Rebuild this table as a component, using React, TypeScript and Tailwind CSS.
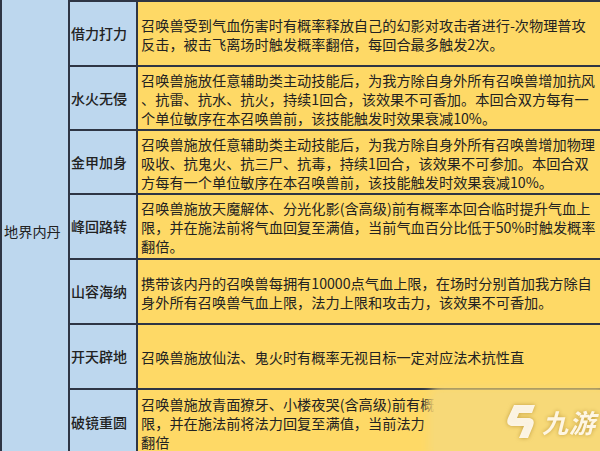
import React from "react";

type Row = { name: string; lines: string[]; h: string };

const rows: Row[] = [
  {
    name: "借力打力",
    h: "h-[65px]",
    lines: [
      "召唤兽受到气血伤害时有概率释放自己的幻影对攻击者进行-次物理普攻",
      "反击，被击飞离场时触发概率翻倍，每回合最多触发2次。",
    ],
  },
  {
    name: "水火无侵",
    h: "h-[64px]",
    lines: [
      "召唤兽施放任意辅助类主动技能后，为我方除自身外所有召唤兽增加抗风",
      "、抗雷、抗水、抗火，持续1回合，该效果不可香加。本回合双方每有一",
      "个单位敏序在本召唤兽前，该技能触发时效果衰减10%。",
    ],
  },
  {
    name: "金甲加身",
    h: "h-[64px]",
    lines: [
      "召唤兽施放任意辅助类主动技能后，为我方除自身外所有召唤兽增加物理",
      "吸收、抗鬼火、抗三尸、抗毒，持续1回合，该效果不可参加。本回合双",
      "方每有一个单位敏序在本召唤兽前，该技能触发时效果衰减10%。",
    ],
  },
  {
    name: "峰回路转",
    h: "h-[65px]",
    lines: [
      "召唤兽施放天魔解体、分光化影(含高级)前有概率本回合临时提升气血上",
      "限，并在施法前将气血回复至满值，当前气血百分比低于50%时触发概率",
      "翻倍。",
    ],
  },
  {
    name: "山容海纳",
    h: "h-[65px]",
    lines: [
      "携带该内丹的召唤兽每拥有10000点气血上限，在场时分别首加我方除自",
      "身外所有召唤兽气血上限，法力上限和攻击力，该效果不可香加。",
    ],
  },
  {
    name: "开天辟地",
    h: "h-[65px]",
    lines: ["召唤兽施放仙法、鬼火时有概率无视目标一定对应法术抗性直"],
  },
  {
    name: "破镜重圆",
    h: "h-[66px]",
    // the watermark hides the rest of these two lines
    lines: [
      "召唤兽施放青面獠牙、小楼夜哭(含高级)前有概",
      "限，并在施法前将法力回复至满值，当前法力",
      "翻倍",
    ],
  },
];

function Logo() {
  return (
    <svg width="34" height="40" viewBox="0 0 34 40" className="drop-shadow-[0_0_2px_rgba(150,110,20,0.6)]">
      <path
        d="M10 3 L31 3 L28 11 L15 11 L13 16 L24 16 C29 16 31 19 29 24 L24 36 L15 36 L20 24 L9 24 C4 24 2 21 4 16 Z"
        fill="#fffaf0"
        opacity="0.92"
      />
    </svg>
  );
}

export default function App() {
  return (
    <div
      className="relative w-[600px] h-[451px] overflow-hidden bg-[#fed966] text-[#222] text-[14.2px] leading-[19px]"
      style={{ fontFamily: '"Noto Sans CJK SC", "Noto Sans", sans-serif' }}
    >
      <div className="flex h-full">
        <div className="w-[70px] shrink-0 bg-[#bdd7ee] border-l-2 border-r-2 border-[#2e3544] flex items-center pl-[2px] pt-[12px]">
          地界内丹
        </div>
        <div className="flex-1 flex flex-col">
          {rows.map((r) => (
            <div key={r.name} className={`flex shrink-0 border-t-2 border-[#2e3544] ${r.h}`}>
              <div className="w-[68px] shrink-0 bg-[#bdd7ee] border-r-2 border-[#2e3544] flex items-center pl-[1px] font-medium text-[14px]">
                {r.name}
              </div>
              <div className="flex-1 bg-[#fed966] flex flex-col justify-center pl-[3px] pt-[2px]">
                {r.lines.map((l, i) => (
                  <div key={i} className="whitespace-nowrap">
                    {l}
                  </div>
                ))}
              </div>
            </div>
          ))}
        </div>
      </div>

      <div className="absolute right-0 bottom-0 w-[166px] h-[58px] bg-[#f7d978] rounded-tl-[6px] shadow-[0_0_8px_6px_#f7d978] flex items-center justify-end gap-[4px] pr-[4px]">
        <Logo />
        <span className="text-[26px] leading-none italic font-bold text-[#fffaf0] opacity-90 tracking-[1px] drop-shadow-[0_0_2px_rgba(150,110,20,0.6)]">
          九游
        </span>
      </div>
    </div>
  );
}
